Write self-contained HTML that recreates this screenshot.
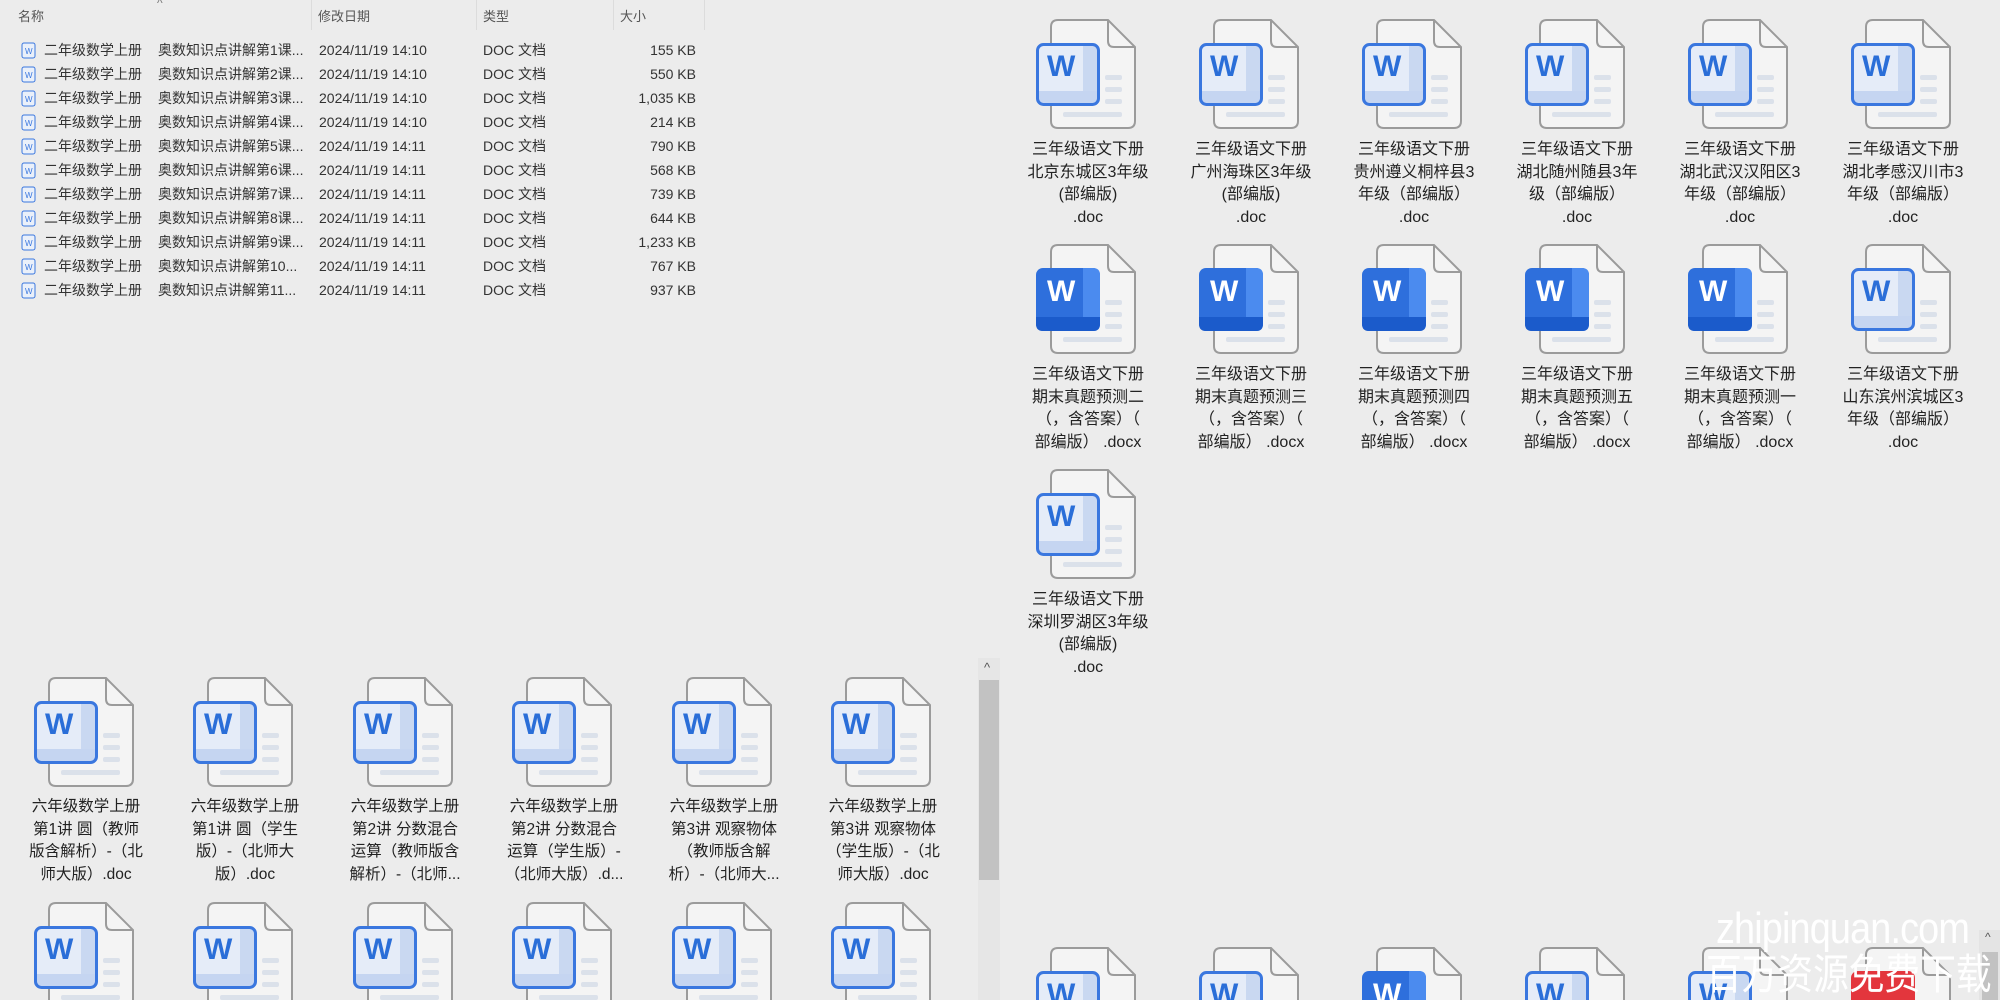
<!DOCTYPE html>
<html><head><meta charset="utf-8">
<style>
*{margin:0;padding:0;box-sizing:border-box}
html,body{width:2000px;height:1000px;overflow:hidden}
body{background:#ececec;font-family:"Liberation Sans","Noto Sans CJK SC",sans-serif;color:#222}
#w{position:relative;width:2000px;height:1000px;overflow:hidden;background:#ececec}
.a{position:absolute}
.hd{position:absolute;top:6px;font-size:13px;color:#555}
.sep{position:absolute;top:0;width:1px;height:30px;background:#dcdcdc}
.row{position:absolute;left:0;width:710px;height:24px;font-size:14px;color:#333;line-height:24px}
.row span{position:absolute;white-space:nowrap}
.ic{position:absolute;width:100px;height:110px}
.t{position:absolute;width:180px;text-align:center;font-size:16px;line-height:22.6px;white-space:nowrap;color:#222}
.t2{font-size:15.5px}
</style></head><body><div id="w">
<svg width="0" height="0" style="position:absolute">
<defs>
<symbol id="pg" viewBox="0 0 100 110">
<path d="M22,1 H72 L99,28 V102 Q99,109 92,109 H22 Q15,109 15,102 V8 Q15,1 22,1 Z" fill="#f4f4f4" stroke="#9b9b9b" stroke-width="2"/>
<path d="M72,1 V22 Q72,28 78,28 H99" fill="none" stroke="#9b9b9b" stroke-width="2"/>
<rect x="69" y="56" width="17" height="5" rx="2" fill="#dbe1ea"/>
<rect x="69" y="68" width="17" height="5" rx="2" fill="#dbe1ea"/>
<rect x="69" y="80" width="17" height="5" rx="2" fill="#dbe1ea"/>
<rect x="27" y="93" width="59" height="5" rx="2" fill="#dbe1ea"/>
</symbol>
<symbol id="lw" viewBox="0 0 100 110">
<use href="#pg"/>
<rect x="1.5" y="25.5" width="61" height="60" rx="6" fill="#e5ecf8"/>
<rect x="47" y="27" width="14" height="57" fill="#c9d8f1"/>
<rect x="3" y="72" width="58" height="12" fill="#c5d5f1"/>
<rect x="1.5" y="25.5" width="61" height="60" rx="6" fill="none" stroke="#3a77df" stroke-width="3"/>
<text x="11" y="57" font-family="Liberation Sans" font-weight="bold" font-size="30" fill="#2a6ed8">W</text>
</symbol>
<symbol id="dw" viewBox="0 0 100 110">
<use href="#pg"/>
<rect x="0" y="24" width="64" height="63" rx="7" fill="#2e6fdc"/>
<path d="M47,24 H57 Q64,24 64,31 V80 Q64,87 57,87 H47 Z" fill="#4b8bef"/>
<path d="M0,73 H64 V80 Q64,87 57,87 H7 Q0,87 0,80 Z" fill="#1b5bcb"/>
<text x="11" y="57" font-family="Liberation Sans" font-weight="bold" font-size="30" fill="#fff">W</text>
</symbol>
<symbol id="rw" viewBox="0 0 100 110">
<use href="#pg"/>
<rect x="0" y="24" width="64" height="63" rx="7" fill="#e3363d"/>
</symbol>
</defs></svg>

<div class="hd" style="left:18px">名称</div>
<div class="a" style="left:157px;top:-4px;font-size:12px;color:#777">^</div>
<div class="sep" style="left:311px"></div>
<div class="hd" style="left:318px">修改日期</div>
<div class="sep" style="left:476px"></div>
<div class="hd" style="left:483px">类型</div>
<div class="sep" style="left:613px"></div>
<div class="hd" style="left:620px">大小</div>
<div class="sep" style="left:704px"></div>

<div class="row" style="top:38px"><svg class="a" style="left:21px;top:4px" width="16" height="17"><rect x="1" y="1" width="13" height="15" rx="2" fill="#eaf0fa" stroke="#3a77df"/><text x="4" y="12" font-size="8" fill="#3a77df" font-family="Liberation Sans">W</text></svg><span style="left:44px">二年级数学上册</span><span style="left:158px">奥数知识点讲解第1课...</span><span style="left:319px">2024/11/19 14:10</span><span style="left:483px">DOC 文档</span><span style="right:14px">155 KB</span></div>
<div class="row" style="top:62px"><svg class="a" style="left:21px;top:4px" width="16" height="17"><rect x="1" y="1" width="13" height="15" rx="2" fill="#eaf0fa" stroke="#3a77df"/><text x="4" y="12" font-size="8" fill="#3a77df" font-family="Liberation Sans">W</text></svg><span style="left:44px">二年级数学上册</span><span style="left:158px">奥数知识点讲解第2课...</span><span style="left:319px">2024/11/19 14:10</span><span style="left:483px">DOC 文档</span><span style="right:14px">550 KB</span></div>
<div class="row" style="top:86px"><svg class="a" style="left:21px;top:4px" width="16" height="17"><rect x="1" y="1" width="13" height="15" rx="2" fill="#eaf0fa" stroke="#3a77df"/><text x="4" y="12" font-size="8" fill="#3a77df" font-family="Liberation Sans">W</text></svg><span style="left:44px">二年级数学上册</span><span style="left:158px">奥数知识点讲解第3课...</span><span style="left:319px">2024/11/19 14:10</span><span style="left:483px">DOC 文档</span><span style="right:14px">1,035 KB</span></div>
<div class="row" style="top:110px"><svg class="a" style="left:21px;top:4px" width="16" height="17"><rect x="1" y="1" width="13" height="15" rx="2" fill="#eaf0fa" stroke="#3a77df"/><text x="4" y="12" font-size="8" fill="#3a77df" font-family="Liberation Sans">W</text></svg><span style="left:44px">二年级数学上册</span><span style="left:158px">奥数知识点讲解第4课...</span><span style="left:319px">2024/11/19 14:10</span><span style="left:483px">DOC 文档</span><span style="right:14px">214 KB</span></div>
<div class="row" style="top:134px"><svg class="a" style="left:21px;top:4px" width="16" height="17"><rect x="1" y="1" width="13" height="15" rx="2" fill="#eaf0fa" stroke="#3a77df"/><text x="4" y="12" font-size="8" fill="#3a77df" font-family="Liberation Sans">W</text></svg><span style="left:44px">二年级数学上册</span><span style="left:158px">奥数知识点讲解第5课...</span><span style="left:319px">2024/11/19 14:11</span><span style="left:483px">DOC 文档</span><span style="right:14px">790 KB</span></div>
<div class="row" style="top:158px"><svg class="a" style="left:21px;top:4px" width="16" height="17"><rect x="1" y="1" width="13" height="15" rx="2" fill="#eaf0fa" stroke="#3a77df"/><text x="4" y="12" font-size="8" fill="#3a77df" font-family="Liberation Sans">W</text></svg><span style="left:44px">二年级数学上册</span><span style="left:158px">奥数知识点讲解第6课...</span><span style="left:319px">2024/11/19 14:11</span><span style="left:483px">DOC 文档</span><span style="right:14px">568 KB</span></div>
<div class="row" style="top:182px"><svg class="a" style="left:21px;top:4px" width="16" height="17"><rect x="1" y="1" width="13" height="15" rx="2" fill="#eaf0fa" stroke="#3a77df"/><text x="4" y="12" font-size="8" fill="#3a77df" font-family="Liberation Sans">W</text></svg><span style="left:44px">二年级数学上册</span><span style="left:158px">奥数知识点讲解第7课...</span><span style="left:319px">2024/11/19 14:11</span><span style="left:483px">DOC 文档</span><span style="right:14px">739 KB</span></div>
<div class="row" style="top:206px"><svg class="a" style="left:21px;top:4px" width="16" height="17"><rect x="1" y="1" width="13" height="15" rx="2" fill="#eaf0fa" stroke="#3a77df"/><text x="4" y="12" font-size="8" fill="#3a77df" font-family="Liberation Sans">W</text></svg><span style="left:44px">二年级数学上册</span><span style="left:158px">奥数知识点讲解第8课...</span><span style="left:319px">2024/11/19 14:11</span><span style="left:483px">DOC 文档</span><span style="right:14px">644 KB</span></div>
<div class="row" style="top:230px"><svg class="a" style="left:21px;top:4px" width="16" height="17"><rect x="1" y="1" width="13" height="15" rx="2" fill="#eaf0fa" stroke="#3a77df"/><text x="4" y="12" font-size="8" fill="#3a77df" font-family="Liberation Sans">W</text></svg><span style="left:44px">二年级数学上册</span><span style="left:158px">奥数知识点讲解第9课...</span><span style="left:319px">2024/11/19 14:11</span><span style="left:483px">DOC 文档</span><span style="right:14px">1,233 KB</span></div>
<div class="row" style="top:254px"><svg class="a" style="left:21px;top:4px" width="16" height="17"><rect x="1" y="1" width="13" height="15" rx="2" fill="#eaf0fa" stroke="#3a77df"/><text x="4" y="12" font-size="8" fill="#3a77df" font-family="Liberation Sans">W</text></svg><span style="left:44px">二年级数学上册</span><span style="left:158px">奥数知识点讲解第10...</span><span style="left:319px">2024/11/19 14:11</span><span style="left:483px">DOC 文档</span><span style="right:14px">767 KB</span></div>
<div class="row" style="top:278px"><svg class="a" style="left:21px;top:4px" width="16" height="17"><rect x="1" y="1" width="13" height="15" rx="2" fill="#eaf0fa" stroke="#3a77df"/><text x="4" y="12" font-size="8" fill="#3a77df" font-family="Liberation Sans">W</text></svg><span style="left:44px">二年级数学上册</span><span style="left:158px">奥数知识点讲解第11...</span><span style="left:319px">2024/11/19 14:11</span><span style="left:483px">DOC 文档</span><span style="right:14px">937 KB</span></div>

<svg class="ic" style="left:1036px;top:19px"><use href="#lw"/></svg>
<svg class="ic" style="left:1199px;top:19px"><use href="#lw"/></svg>
<svg class="ic" style="left:1362px;top:19px"><use href="#lw"/></svg>
<svg class="ic" style="left:1525px;top:19px"><use href="#lw"/></svg>
<svg class="ic" style="left:1688px;top:19px"><use href="#lw"/></svg>
<svg class="ic" style="left:1851px;top:19px"><use href="#lw"/></svg>
<div class="t" style="left:998px;top:139px">三年级语文下册<br>北京东城区3年级<br>(部编版)<br>.doc</div>
<div class="t" style="left:1161px;top:139px">三年级语文下册<br>广州海珠区3年级<br>(部编版)<br>.doc</div>
<div class="t" style="left:1324px;top:139px">三年级语文下册<br>贵州遵义桐梓县3<br>年级（部编版）<br>.doc</div>
<div class="t" style="left:1487px;top:139px">三年级语文下册<br>湖北随州随县3年<br>级（部编版）<br>.doc</div>
<div class="t" style="left:1650px;top:139px">三年级语文下册<br>湖北武汉汉阳区3<br>年级（部编版）<br>.doc</div>
<div class="t" style="left:1813px;top:139px">三年级语文下册<br>湖北孝感汉川市3<br>年级（部编版）<br>.doc</div>

<svg class="ic" style="left:1036px;top:244px"><use href="#dw"/></svg>
<svg class="ic" style="left:1199px;top:244px"><use href="#dw"/></svg>
<svg class="ic" style="left:1362px;top:244px"><use href="#dw"/></svg>
<svg class="ic" style="left:1525px;top:244px"><use href="#dw"/></svg>
<svg class="ic" style="left:1688px;top:244px"><use href="#dw"/></svg>
<svg class="ic" style="left:1851px;top:244px"><use href="#lw"/></svg>
<div class="t" style="left:998px;top:364px">三年级语文下册<br>期末真题预测二<br>（，含答案）（<br>部编版） .docx</div>
<div class="t" style="left:1161px;top:364px">三年级语文下册<br>期末真题预测三<br>（，含答案）（<br>部编版） .docx</div>
<div class="t" style="left:1324px;top:364px">三年级语文下册<br>期末真题预测四<br>（，含答案）（<br>部编版） .docx</div>
<div class="t" style="left:1487px;top:364px">三年级语文下册<br>期末真题预测五<br>（，含答案）（<br>部编版） .docx</div>
<div class="t" style="left:1650px;top:364px">三年级语文下册<br>期末真题预测一<br>（，含答案）（<br>部编版） .docx</div>
<div class="t" style="left:1813px;top:364px">三年级语文下册<br>山东滨州滨城区3<br>年级（部编版）<br>.doc</div>

<svg class="ic" style="left:1036px;top:469px"><use href="#lw"/></svg>
<div class="t" style="left:998px;top:589px">三年级语文下册<br>深圳罗湖区3年级<br>(部编版)<br>.doc</div>

<svg class="ic" style="left:1036px;top:947px"><use href="#lw"/></svg>
<svg class="ic" style="left:1199px;top:947px"><use href="#lw"/></svg>
<svg class="ic" style="left:1362px;top:947px"><use href="#dw"/></svg>
<svg class="ic" style="left:1525px;top:947px"><use href="#lw"/></svg>
<svg class="ic" style="left:1688px;top:947px"><use href="#lw"/></svg>
<svg class="ic" style="left:1851px;top:947px"><use href="#rw"/></svg>
<div class="a" style="left:1979px;top:930px;width:21px;height:70px;background:#e4e4e4"></div>
<div class="a" style="left:1982px;top:952px;width:16px;height:48px;background:#c2c2c2"></div>
<div class="a" style="left:1985px;top:930px;font-size:12px;color:#555">^</div>

<svg class="ic" style="left:34px;top:677px"><use href="#lw"/></svg>
<svg class="ic" style="left:193px;top:677px"><use href="#lw"/></svg>
<svg class="ic" style="left:353px;top:677px"><use href="#lw"/></svg>
<svg class="ic" style="left:512px;top:677px"><use href="#lw"/></svg>
<svg class="ic" style="left:672px;top:677px"><use href="#lw"/></svg>
<svg class="ic" style="left:831px;top:677px"><use href="#lw"/></svg>
<div class="t t2" style="left:-4px;top:796px">六年级数学上册<br>第1讲 圆（教师<br>版含解析）-（北<br>师大版）.doc</div>
<div class="t t2" style="left:155px;top:796px">六年级数学上册<br>第1讲 圆（学生<br>版）-（北师大<br>版）.doc</div>
<div class="t t2" style="left:315px;top:796px">六年级数学上册<br>第2讲 分数混合<br>运算（教师版含<br>解析）-（北师...</div>
<div class="t t2" style="left:474px;top:796px">六年级数学上册<br>第2讲 分数混合<br>运算（学生版）-<br>（北师大版）.d...</div>
<div class="t t2" style="left:634px;top:796px">六年级数学上册<br>第3讲 观察物体<br>（教师版含解<br>析）-（北师大...</div>
<div class="t t2" style="left:793px;top:796px">六年级数学上册<br>第3讲 观察物体<br>（学生版）-（北<br>师大版）.doc</div>
<svg class="ic" style="left:34px;top:902px"><use href="#lw"/></svg>
<svg class="ic" style="left:193px;top:902px"><use href="#lw"/></svg>
<svg class="ic" style="left:353px;top:902px"><use href="#lw"/></svg>
<svg class="ic" style="left:512px;top:902px"><use href="#lw"/></svg>
<svg class="ic" style="left:672px;top:902px"><use href="#lw"/></svg>
<svg class="ic" style="left:831px;top:902px"><use href="#lw"/></svg>

<div class="a" style="left:978px;top:658px;width:22px;height:342px;background:#e6e6e6"></div>
<div class="a" style="left:979px;top:680px;width:20px;height:200px;background:#c2c2c2"></div>
<div class="a" style="left:984px;top:660px;font-size:13px;color:#555">^</div>

<div class="a" style="left:1716px;top:904px;font-size:44px;color:#fff;white-space:nowrap;transform:scaleX(0.86);transform-origin:left top;letter-spacing:-1px">zhipinquan.com</div>
<div class="a" style="left:1706px;top:950px;font-size:42px;color:#fff;white-space:nowrap;transform:scaleX(0.85);transform-origin:left top;line-height:50px">百万资源免费下载</div>
</div></body></html>
